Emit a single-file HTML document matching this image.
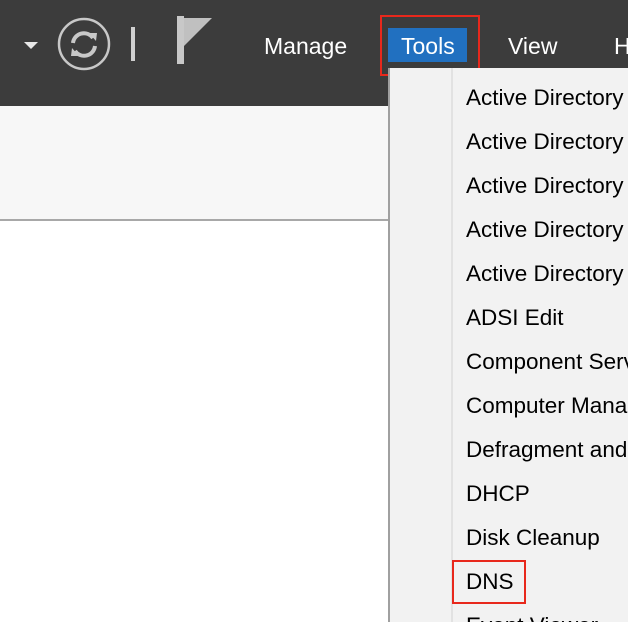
<!DOCTYPE html>
<html><head><meta charset="utf-8"><style>
*{margin:0;padding:0;box-sizing:border-box}
html,body{width:628px;height:622px;overflow:hidden}
body{position:relative;background:#fff;font-family:"Liberation Sans","DejaVu Sans",sans-serif}
.hdr{position:absolute;left:0;top:0;width:628px;height:106px;background:#3c3c3c}
.band{position:absolute;left:0;top:106px;width:388px;height:115px;background:#f7f7f7;border-bottom:2px solid #a8a8a8}
.nav{position:absolute;top:33px;color:#fff;font-size:23px}
.menu{position:absolute;left:388px;top:68px;width:240px;height:554px;background:#f2f2f2;border-left:2px solid #a0a0a0;overflow:hidden}
.menu .sep{position:absolute;left:61px;top:0;width:2px;height:100%;background:#e2e2e2}
.item{position:absolute;left:76px;font-size:22.5px;color:#000;white-space:nowrap}
.red{position:absolute;border:2px solid #e8281c}
</style></head><body>
<div class="hdr"></div>
<div class="band"></div>
<svg style="position:absolute;left:0;top:0" width="240" height="80">
<polygon points="24,42 38,42 31,49" fill="#e8e8e8"/>
<circle cx="84" cy="44" r="25" fill="none" stroke="#c8c8c8" stroke-width="2.5"/>
<path d="M73,43 A11,11 0 0 1 93,38" fill="none" stroke="#c8c8c8" stroke-width="4"/>
<polygon points="89,33 97,33 96,41" fill="#c8c8c8"/>
<path d="M95,46 A11,11 0 0 1 75,51" fill="none" stroke="#c8c8c8" stroke-width="4"/>
<polygon points="79,56 71,56 72,48" fill="#c8c8c8"/>
<rect x="131" y="27" width="4" height="34" fill="#d0d0d0"/>
<rect x="177" y="16" width="7" height="48" fill="#c8c8c8"/>
<polygon points="184,18 212,18 184,46" fill="#c0c0c0"/>
</svg>
<div class="nav" style="left:264px">Manage</div>
<div style="position:absolute;left:388px;top:28px;width:79px;height:34px;background:#2170c0"></div>
<div class="nav" style="left:401px">Tools</div>
<div class="nav" style="left:508px">View</div>
<div class="nav" style="left:614px">H</div>
<div class="red" style="left:380px;top:15px;width:100px;height:61px"></div>
<div class="menu"><div class="sep"></div>
<div class="item" style="top:17px">Active Directory</div>
<div class="item" style="top:61px">Active Directory</div>
<div class="item" style="top:105px">Active Directory</div>
<div class="item" style="top:149px">Active Directory</div>
<div class="item" style="top:193px">Active Directory</div>
<div class="item" style="top:237px">ADSI Edit</div>
<div class="item" style="top:281px">Component Services</div>
<div class="item" style="top:325px">Computer Management</div>
<div class="item" style="top:369px">Defragment and</div>
<div class="item" style="top:413px">DHCP</div>
<div class="item" style="top:457px">Disk Cleanup</div>
<div class="item" style="top:501px">DNS</div>
<div class="item" style="top:545px">Event Viewer</div>
</div>
<div class="red" style="left:452px;top:560px;width:74px;height:44px"></div>
</body></html>
